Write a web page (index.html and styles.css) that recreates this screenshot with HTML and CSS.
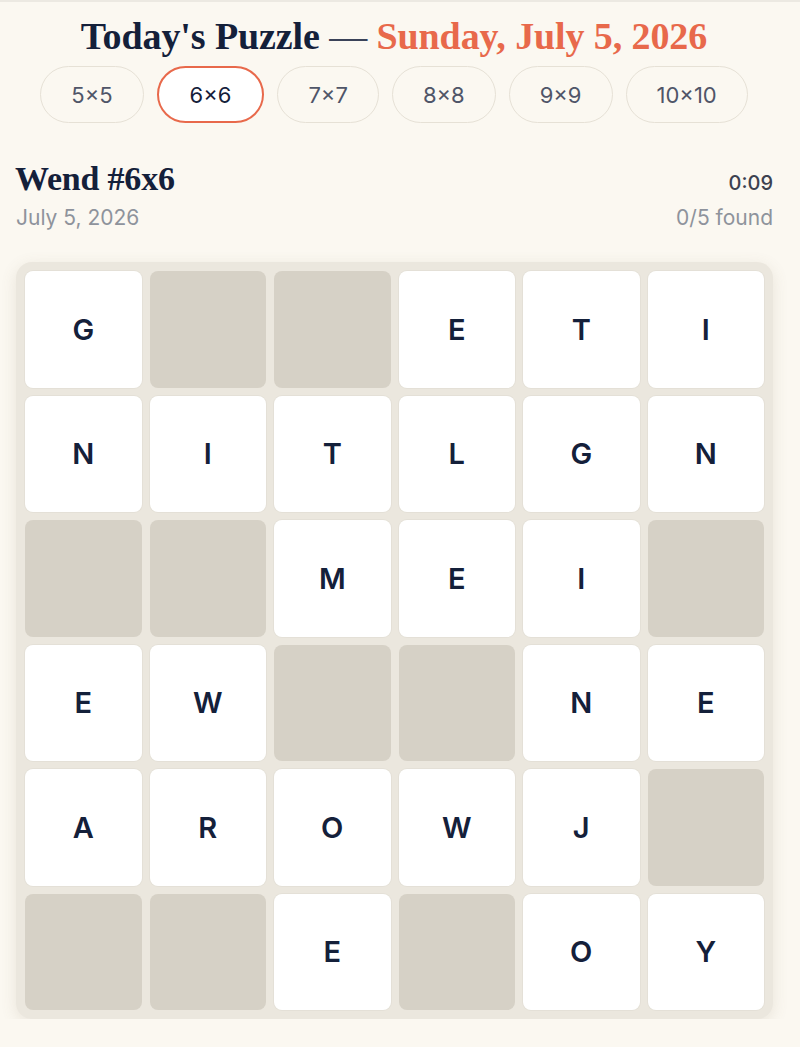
FILE: index.html
```html
<!DOCTYPE html>
<html lang="en">
<head>
    <meta charset="UTF-8">
    <meta name="viewport" content="width=device-width, initial-scale=1.0">
    <title>Wend — Today's Puzzle</title>
    <link rel="stylesheet" href="styles.css">
</head>
<body>
    <div class="header">
        <h1 class="page-title">Today's Puzzle <span class="dash">—</span> <span class="title-date">Sunday, July 5, 2026</span></h1>
        <div class="size-tabs">
            <button class="size-tab">5×5</button>
            <button class="size-tab active">6×6</button>
            <button class="size-tab">7×7</button>
            <button class="size-tab">8×8</button>
            <button class="size-tab">9×9</button>
            <button class="size-tab">10×10</button>
        </div>
    </div>

    <div class="game">
        <div class="game-head">
            <div>
                <div class="game-name">Wend #6x6</div>
                <div class="game-date">July 5, 2026</div>
            </div>
            <div class="game-status">
                <div class="timer">0:09</div>
                <div class="found">0/5 found</div>
            </div>
        </div>

        <div class="board" id="board"></div>
    </div>

    <script>
        // '.' marks a blocked square
        const rows = [
            'G..ETI',
            'NITLGN',
            '..MEI.',
            'EW..NE',
            'AROWJ.',
            '..E.OY'
        ];

        const board = document.getElementById('board');
        rows.forEach(row => {
            row.split('').forEach(ch => {
                const cell = document.createElement('div');
                if (ch === '.') {
                    cell.className = 'cell blocked';
                } else {
                    cell.className = 'cell';
                    cell.textContent = ch;
                }
                board.appendChild(cell);
            });
        });
    </script>
</body>
</html>
```

FILE: styles.css
```css
:root {
    --ink: #14203a;
    --accent: #e8694b;
    --page: #fbf8f1;
    --muted: #8e939c;
    --line: #e6e1d6;
}
body {
    margin: 0;
    padding: 0;
    background-color: var(--page);
    color: var(--ink);
    font-family: Inter, "Liberation Sans", sans-serif;
    border-top: 2px solid #ece9e2;
}
.header {
    text-align: center;
    padding-right: 12px;
}
.page-title {
    margin: 12px 0 0;
    font-family: "Liberation Serif", serif;
    font-weight: bold;
    font-size: 38px;
    line-height: 44px;
    letter-spacing: -0.1px;
    color: var(--ink);
}
.dash {
    font-weight: normal;
    color: #3a4258;
}
.title-date {
    color: var(--accent);
}
.size-tabs {
    display: flex;
    justify-content: center;
    gap: 13px;
    margin-top: 8px;
}
.size-tab {
    height: 57px;
    padding: 0 30px;
    border: 1px solid var(--line);
    border-radius: 29px;
    background: transparent;
    font-family: Inter, "Liberation Sans", sans-serif;
    font-size: 22px;
    color: #4f5568;
    cursor: pointer;
}
.size-tab.active {
    padding: 0 31px;
    border: 2px solid var(--accent);
    background-color: white;
    color: var(--ink);
}
.game {
    padding: 0 27px 0 16px;
}
.game-head {
    display: flex;
    justify-content: space-between;
    margin-top: 36px;
}
.game-name {
    font-family: "Liberation Serif", serif;
    font-weight: bold;
    font-size: 34px;
    line-height: 40px;
    letter-spacing: -0.2px;
    margin-left: -1px;
}
.game-date {
    margin-top: 6px;
    font-size: 21px;
    color: var(--muted);
}
.game-status {
    text-align: right;
    padding-top: 12px;
}
.timer {
    font-size: 20px;
    font-weight: 500;
    color: #3b4150;
}
.found {
    margin-top: 10px;
    font-size: 21px;
    color: var(--muted);
}
.board {
    display: grid;
    grid-template-columns: repeat(6, 1fr);
    gap: 8px;
    padding: 9px;
    margin-top: 32px;
    background-color: #ebe7de;
    border-radius: 16px;
    box-shadow: 0 4px 16px rgba(120, 105, 80, 0.14);
}
.cell {
    aspect-ratio: 1;
    display: flex;
    align-items: center;
    justify-content: center;
    background-color: white;
    border-radius: 8px;
    box-shadow: 0 0 0 1px #e4e0d7;
    font-size: 29px;
    font-weight: 600;
    color: var(--ink);
}
.cell.blocked {
    background-color: #d6d1c6;
    box-shadow: none;
}
```
